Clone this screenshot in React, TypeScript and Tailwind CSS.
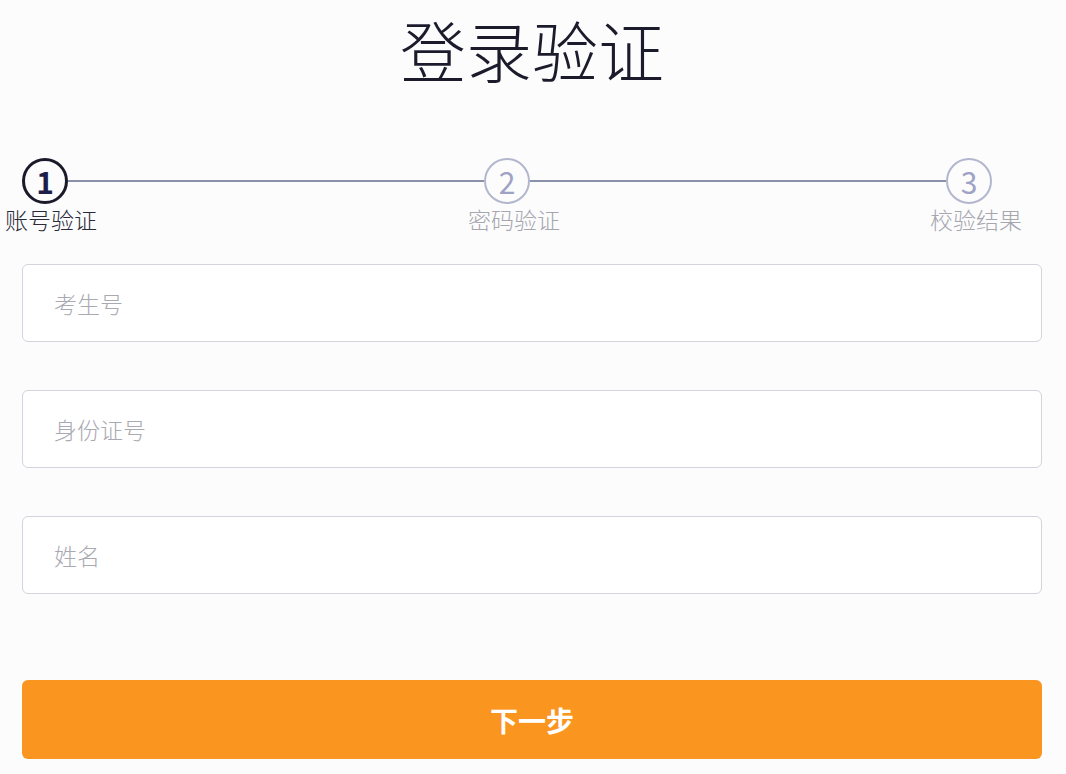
import React from "react";

const font = { fontFamily: '"Noto Sans CJK SC", "Noto Sans", sans-serif' };

const steps = [
  { num: "1", label: "账号验证", active: true },
  { num: "2", label: "密码验证", active: false },
  { num: "3", label: "校验结果", active: false },
];

const fields = ["考生号", "身份证号", "姓名"];

function Step({ num, label, active }: { num: string; label: string; active: boolean }) {
  return (
    <div className="flex w-[46px] flex-col items-center">
      <div
        className={
          active
            ? "flex h-[46px] w-[46px] items-center justify-center rounded-full border-[3px] border-[#1b1a2b] text-[30px] font-bold leading-none text-[#1d1f4a]"
            : "flex h-[46px] w-[46px] items-center justify-center rounded-full border-2 border-[#b3b7cd] text-[30px] leading-none text-[#9ea2c4]"
        }
      >
        {num}
      </div>
      <div
        className={
          active
            ? "ml-[12px] whitespace-nowrap text-[23px] font-light leading-[30px] text-[#2a2a38]"
            : "ml-[14px] whitespace-nowrap text-[23px] font-light leading-[30px] text-[#a6a6ae]"
        }
      >
        {label}
      </div>
    </div>
  );
}

export default function App() {
  return (
    <div className="min-h-[774px] w-full bg-[#fcfcfd] pl-[22px] pr-[24px]" style={font}>
      <h1 className="pt-[10px] text-center text-[66px] font-light leading-[76px] text-[#1c1b2c]">
        登录验证
      </h1>

      <div className="mt-[72px] flex w-[970px] items-start">
        <Step {...steps[0]} />
        <div className="mt-[22px] h-[2px] flex-1 bg-[#8b91aa]" />
        <Step {...steps[1]} />
        <div className="mt-[22px] h-[2px] flex-1 bg-[#8b91aa]" />
        <Step {...steps[2]} />
      </div>

      <form className="mt-[30px] flex flex-col gap-[48px]" onSubmit={(e) => e.preventDefault()}>
        {fields.map((f) => (
          <input
            key={f}
            type="text"
            placeholder={f}
            className="h-[78px] w-full rounded-[6px] border border-[#d3d5de] bg-white pl-[31px] text-[23px] font-light text-[#333] outline-none placeholder:text-[#a9a9b2]"
          />
        ))}
        <button
          type="submit"
          className="mt-[38px] h-[79px] w-full rounded-[6px] bg-[#fa9520] text-[28px] font-bold text-white"
        >
          下一步
        </button>
      </form>
    </div>
  );
}
